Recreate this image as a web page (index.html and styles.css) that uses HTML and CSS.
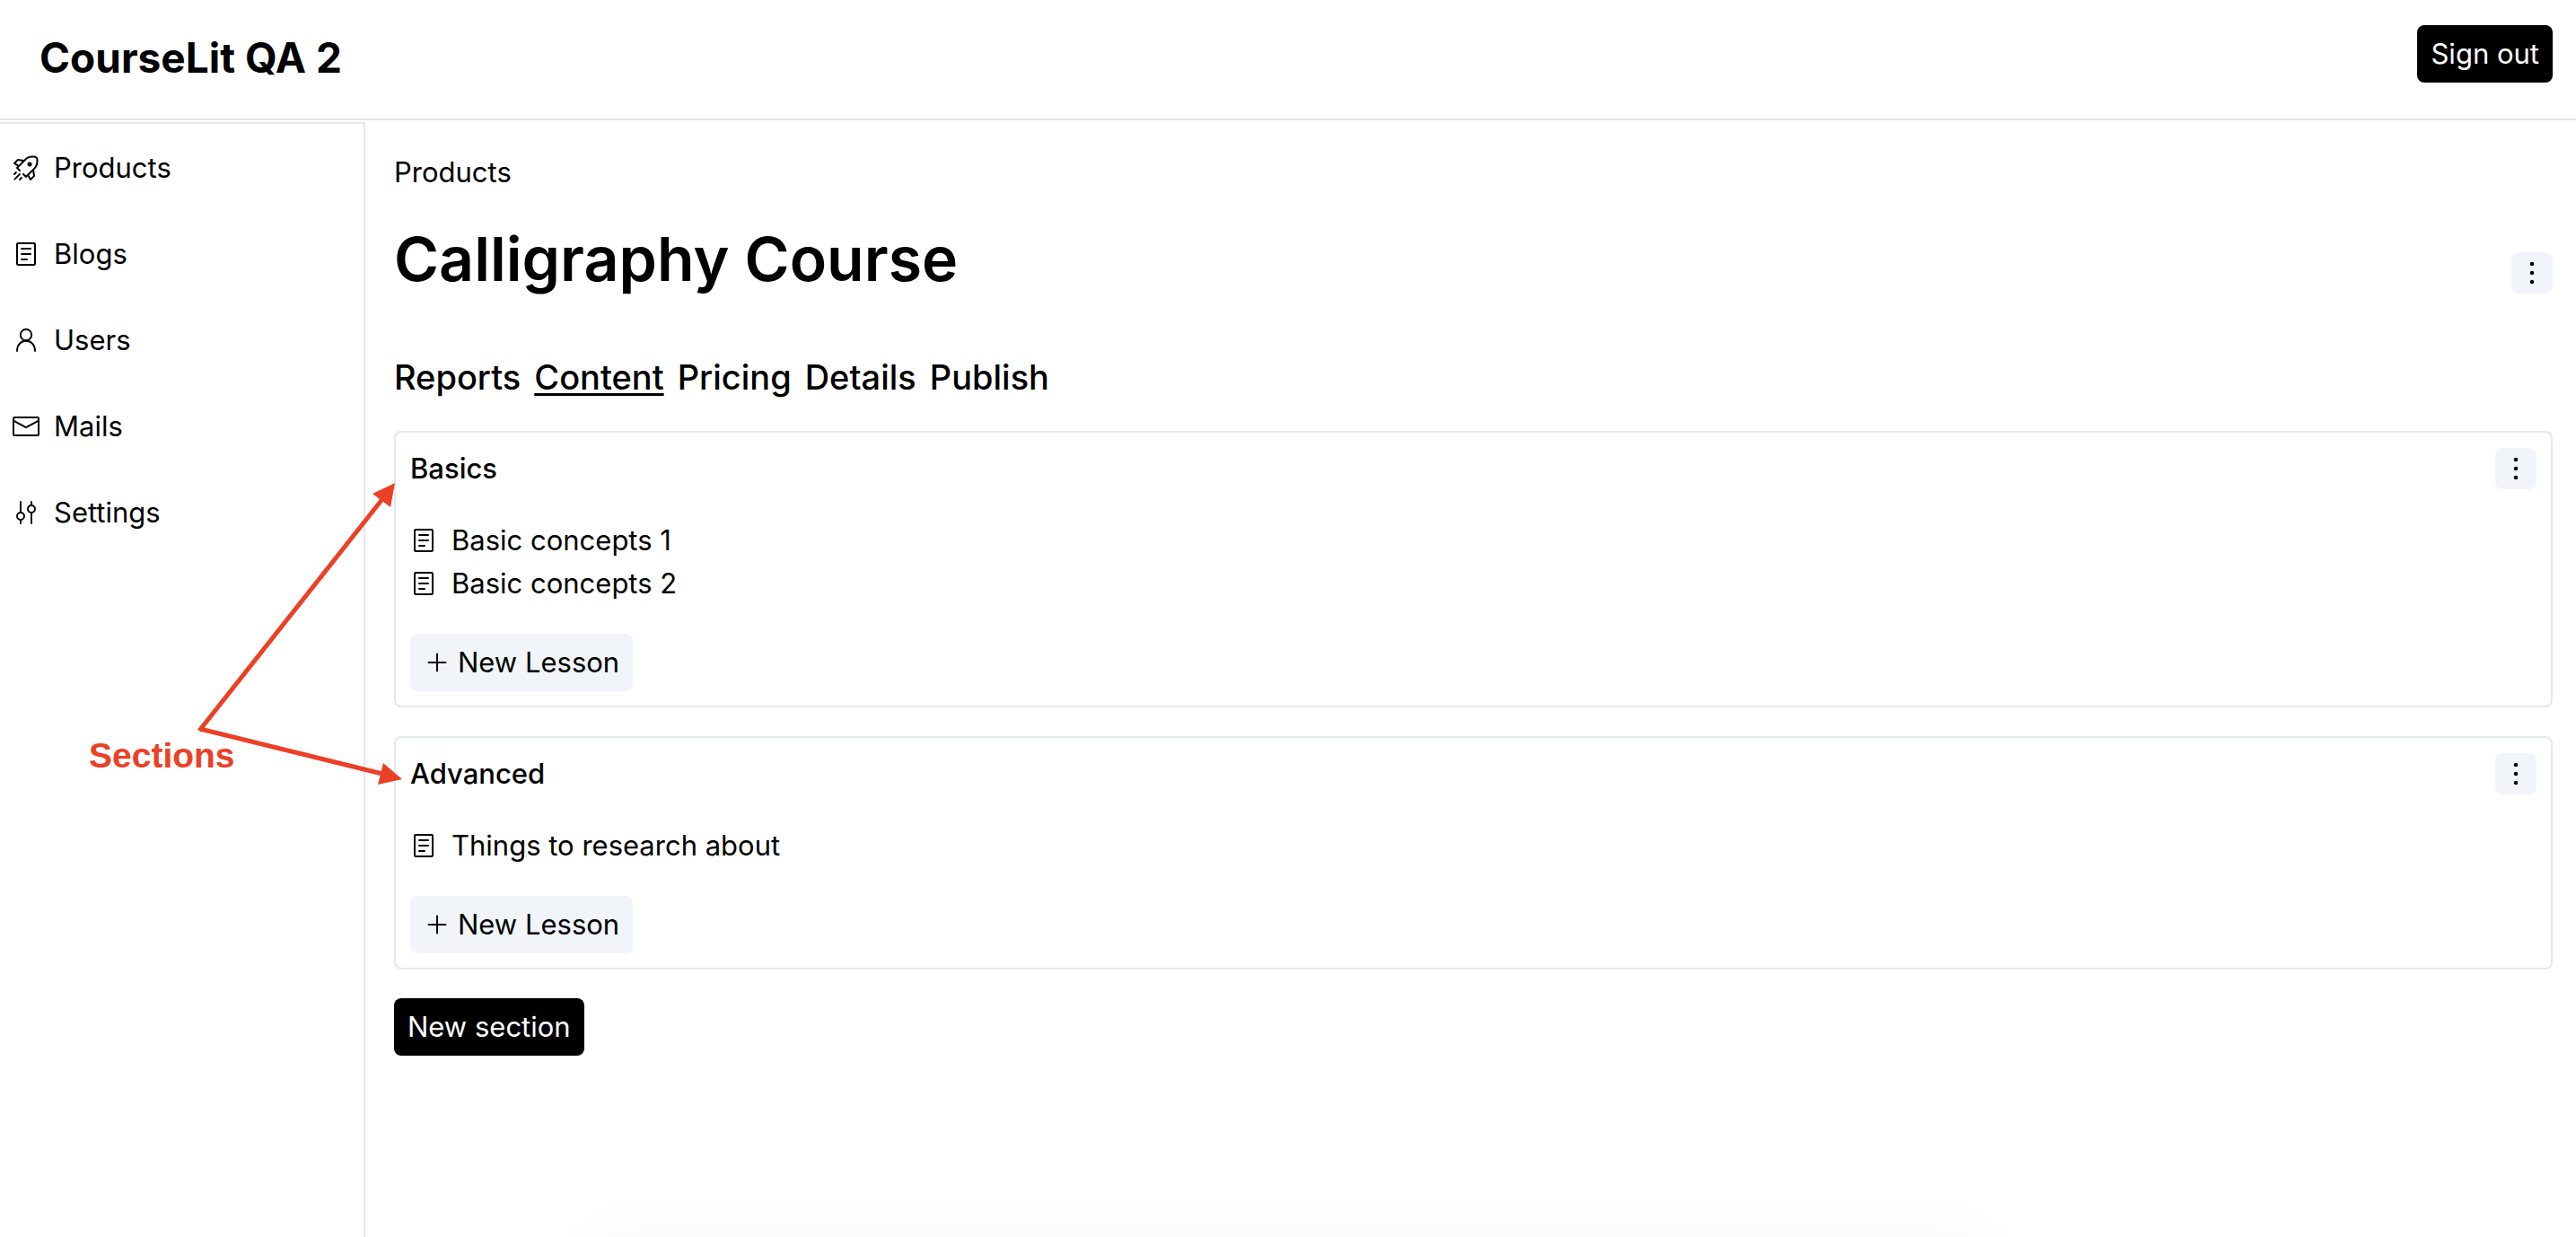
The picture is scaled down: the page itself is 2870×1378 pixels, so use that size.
FILE: index.html
```html
<!DOCTYPE html>
<html lang="en">
<head>
<meta charset="utf-8">
<title>CourseLit QA 2</title>
<link rel="stylesheet" href="styles.css">
</head>
<body>
<svg class="sprite" aria-hidden="true">
  <symbol id="rocket" viewBox="0 0 15 15">
    <path fill="currentColor" fill-rule="evenodd" d="M6.85357 3.85355L7.65355 3.05353C8.2981 2.40901 9.42858 1.96172 10.552 1.80125C11.1056 1.72217 11.6291 1.71725 12.0564 1.78124C12.4987 1.84748 12.7698 1.97696 12.8965 2.10357C13.0231 2.23018 13.1526 2.50125 13.2188 2.94357C13.2828 3.37086 13.2779 3.89439 13.1988 4.44801C13.0383 5.57139 12.591 6.70188 11.9464 7.34645L7.49999 11.7929L6.35354 10.6465C6.15827 10.4512 5.84169 10.4512 5.64643 10.6465C5.45117 10.8417 5.45117 11.1583 5.64643 11.3536L7.14644 12.8536C7.34171 13.0488 7.65829 13.0488 7.85355 12.8536L8.40073 12.3064L9.57124 14.2572C9.65046 14.3893 9.78608 14.4774 9.9389 14.4963C10.0917 14.5151 10.2447 14.4624 10.3535 14.3536L12.3535 12.3536C12.4648 12.2423 12.5172 12.0851 12.495 11.9293L12.0303 8.67679L12.6536 8.05355C13.509 7.19808 14.0117 5.82855 14.1887 4.58943C14.2784 3.9618 14.2891 3.33847 14.2078 2.79546C14.1287 2.26748 13.9519 1.74482 13.6035 1.39645C13.2552 1.04809 12.7325 0.871332 12.2045 0.792264C11.6615 0.710941 11.0382 0.721644 10.4105 0.8113C9.17143 0.988306 7.80189 1.491 6.94644 2.34642L6.32322 2.96968L3.07071 2.50504C2.91492 2.48278 2.75773 2.53517 2.64645 2.64646L0.646451 4.64645C0.537579 4.75533 0.484938 4.90829 0.50375 5.0611C0.522563 5.21391 0.61073 5.34954 0.742757 5.42876L2.69364 6.59928L2.14646 7.14645C2.0527 7.24022 2.00002 7.3674 2.00002 7.50001C2.00002 7.63261 2.0527 7.75979 2.14646 7.85356L3.64647 9.35356C3.84173 9.54883 4.15831 9.54883 4.35357 9.35356C4.54884 9.1583 4.54884 8.84172 4.35357 8.64646L3.20712 7.50001L3.85357 6.85356L6.85357 3.85355ZM10.0993 13.1936L9.12959 11.5775L11.1464 9.56067L11.4697 11.8232L10.0993 13.1936ZM3.42251 5.87041L5.43935 3.85356L3.17678 3.53034L1.80638 4.90074L3.42251 5.87041Z"/>
    <circle cx="9.5" cy="5.5" r="1.25" fill="currentColor"/>
    <path fill="none" stroke="currentColor" stroke-width=".9" stroke-linecap="round" d="M1 11L2 10M1.2 13.8L4 11M4 14L5 13"/>
  </symbol>
  <symbol id="reader" viewBox="0 0 15 15">
    <g fill="none" stroke="currentColor"><rect x="2.5" y="1.5" width="10" height="12" rx=".6"/>
    <path stroke-linecap="round" d="M5 4.5H10M5 7.5H10M5 10.5H8"/></g>
  </symbol>
  <symbol id="person" viewBox="0 0 15 15">
    <g fill="none" stroke="currentColor" stroke-width=".95"><circle cx="7.5" cy="4.5" r="3.1"/>
    <path stroke-linecap="round" d="M2.5 13.5C2.5 10.1 4.5 7.9 7.5 7.9S12.5 10.1 12.5 13.5"/></g>
  </symbol>
  <symbol id="mail" viewBox="0 0 15 15">
    <g fill="none" stroke="currentColor"><rect x=".5" y="2.5" width="14" height="10" rx=".6"/>
    <path d="M.5 4.3L7.5 8.1L14.5 4.3"/></g>
  </symbol>
  <symbol id="mixer" viewBox="0 0 15 15">
    <g fill="none" stroke="currentColor" stroke-width=".95"><circle cx="4.5" cy="9.5" r="2"/><circle cx="10.5" cy="5.5" r="2"/>
    <path stroke-linecap="round" d="M4.5 1.5V7.5M4.5 11.5V13.5M10.5 1.5V3.5M10.5 7.5V13.5"/></g>
  </symbol>
  <symbol id="dots" viewBox="0 0 15 15">
    <g fill="currentColor"><circle cx="7.5" cy="2.5" r="1.125"/><circle cx="7.5" cy="7.5" r="1.125"/><circle cx="7.5" cy="12.5" r="1.125"/></g>
  </symbol>
  <symbol id="plus" viewBox="0 0 15 15">
    <path fill="none" stroke="currentColor" stroke-width=".95" stroke-linecap="round" d="M7.5 2.75V12.25M2.75 7.5H12.25"/>
  </symbol>
</svg>

<header class="topbar">
  <a class="brand" href="#">CourseLit QA 2</a>
  <button class="button primary">Sign out</button>
</header>

<div class="shell">
  <nav class="sidebar" aria-label="Dashboard">
    <a class="nav-link" href="#"><svg class="icon"><use href="#rocket"/></svg>Products</a>
    <a class="nav-link" href="#"><svg class="icon"><use href="#reader"/></svg>Blogs</a>
    <a class="nav-link" href="#"><svg class="icon"><use href="#person"/></svg>Users</a>
    <a class="nav-link" href="#"><svg class="icon"><use href="#mail"/></svg>Mails</a>
    <a class="nav-link" href="#"><svg class="icon"><use href="#mixer"/></svg>Settings</a>
  </nav>

  <main class="content">
    <a class="crumb" href="#">Products</a>
    <div class="title-row">
      <h1 class="title">Calligraphy Course</h1>
      <button class="menu-button" aria-label="Course options"><svg class="icon"><use href="#dots"/></svg></button>
    </div>
    <nav class="tabs" aria-label="Course">
      <a class="tab" href="#">Reports</a>
      <a class="tab active" href="#" aria-current="page">Content</a>
      <a class="tab" href="#">Pricing</a>
      <a class="tab" href="#">Details</a>
      <a class="tab" href="#">Publish</a>
    </nav>

    <section class="card">
      <div class="card-head">
        <h2 class="card-title">Basics</h2>
        <button class="menu-button" aria-label="Basics options"><svg class="icon"><use href="#dots"/></svg></button>
      </div>
      <ul class="lessons">
        <li><a class="lesson" href="#"><svg class="icon"><use href="#reader"/></svg>Basic concepts 1</a></li>
        <li><a class="lesson" href="#"><svg class="icon"><use href="#reader"/></svg>Basic concepts 2</a></li>
      </ul>
      <button class="button soft"><svg class="icon"><use href="#plus"/></svg>New Lesson</button>
    </section>

    <section class="card">
      <div class="card-head">
        <h2 class="card-title">Advanced</h2>
        <button class="menu-button" aria-label="Advanced options"><svg class="icon"><use href="#dots"/></svg></button>
      </div>
      <ul class="lessons">
        <li><a class="lesson" href="#"><svg class="icon"><use href="#reader"/></svg>Things to research about</a></li>
      </ul>
      <button class="button soft"><svg class="icon"><use href="#plus"/></svg>New Lesson</button>
    </section>

    <button class="button primary">New section</button>
  </main>
</div>

<svg class="callout" width="480" height="900" viewBox="0 0 480 900">
  <g fill="none" stroke="currentColor" stroke-width="5"><path d="M222 814L430 551"/><path d="M223 812L430 863"/></g>
  <g fill="currentColor"><path d="M440 538L415 550L435 565Z"/><path d="M448 868L427 850L421 874Z"/></g>
  <text class="callout-text" x="99" y="855">Sections</text>
</svg>
<div class="bottom-glow"></div>
</body>
</html>
```
FILE: styles.css
```css
* {
  box-sizing: border-box;
}

body {
  margin: 0;
  min-height: 100vh;
  display: flex;
  flex-direction: column;
  position: relative;
  background: #fff;
  color: #000;
  font-family: Inter, "Liberation Sans", sans-serif;
  font-size: 31px;
  line-height: 48px;
}

a {
  color: inherit;
  text-decoration: none;
}

h1,
h2,
ul {
  margin: 0;
  padding: 0;
  list-style: none;
}

.sprite {
  position: absolute;
  width: 0;
  height: 0;
}

.icon {
  flex: none;
  display: block;
  width: 30px;
  height: 30px;
}

.topbar {
  display: flex;
  justify-content: space-between;
  align-items: flex-start;
  padding: 28px 26px 40px 44px;
  border-bottom: 2px solid #e2e8f0;
}

.brand {
  font-size: 46px;
  font-weight: 700;
  line-height: 64px;
  padding-top: 4px;
  margin-bottom: -4px;
}

.button {
  display: inline-flex;
  align-items: center;
  gap: 8px;
  height: 64px;
  padding: 0 15px;
  border: 0;
  border-radius: 8px;
  font: inherit;
  color: #000;
}

.primary {
  background: #000;
  color: #fff;
}

.soft {
  background: #f1f5f9;
}

.menu-button {
  padding: 8px;
  border: 0;
  border-radius: 8px;
  background: #f1f5f9;
  color: #000;
}

.shell {
  flex: 1;
  display: flex;
}

.sidebar {
  flex: none;
  width: 407px;
  margin-top: 2px;
  padding-top: 1px;
  border-top: 2px solid #e2e8f0;
  border-right: 2px solid #e2e8f0;
}

.nav-link {
  display: flex;
  align-items: center;
  gap: 16px;
  padding: 24px 14px;
}

.content {
  flex: 1;
  min-width: 0;
  display: flex;
  flex-direction: column;
  align-items: flex-start;
  gap: 32px;
  padding: 34px 26px 32px 32px;
}

.title-row {
  align-self: stretch;
  display: flex;
  justify-content: space-between;
  align-items: center;
}

.title {
  padding-bottom: 32px;
  font-size: 68px;
  font-weight: 600;
  line-height: 80px;
}

.tabs {
  display: flex;
  gap: 15px;
  font-size: 38px;
  font-weight: 500;
  line-height: 56px;
}

.active {
  text-decoration: underline;
  text-decoration-thickness: 3px;
  text-underline-offset: 4px;
}

.card {
  align-self: stretch;
  display: flex;
  flex-direction: column;
  align-items: flex-start;
  gap: 32px;
  padding: 16px;
  border: 2px solid #e2e8f0;
  border-radius: 8px;
}

.card-head {
  align-self: stretch;
  display: flex;
  justify-content: space-between;
  align-items: center;
}

.card-title {
  font-size: 31px;
  font-weight: 500;
  line-height: 48px;
}

.lesson {
  display: flex;
  align-items: center;
  gap: 16px;
}

.callout {
  position: absolute;
  top: 0;
  left: 0;
  color: #eb4026;
  pointer-events: none;
}

.callout-text {
  fill: currentColor;
  font: 700 39px "Liberation Sans", Arial, sans-serif;
}

.bottom-glow {
  position: fixed;
  top: 100%;
  left: 23%;
  right: 23%;
  height: 120px;
  box-shadow: 0 4px 70px rgba(0, 0, 0, 0.04);
}
```
